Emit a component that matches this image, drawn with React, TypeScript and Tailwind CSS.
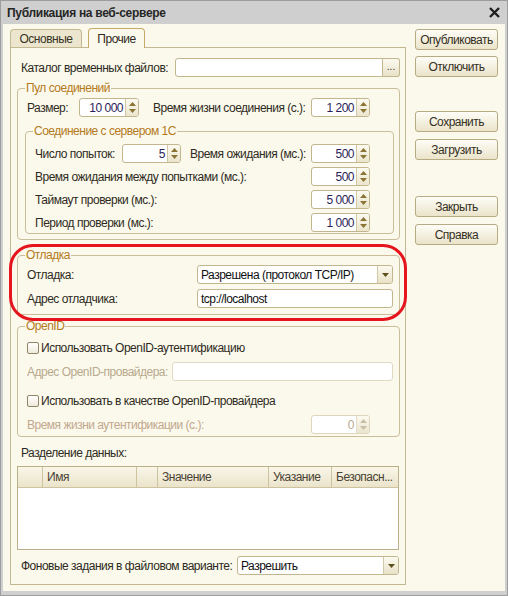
import React from "react";

type Kids = { children?: React.ReactNode; className?: string };

function Btn({ children, className = "" }: Kids) {
  return (
    <div
      className={`flex h-[21px] w-[83px] items-center justify-center rounded-[3px] border border-[#b7ab84] bg-linear-to-b from-[#fefdf7] to-[#ebe4ca] text-[#35301f] ${className}`}
    >
      {children}
    </div>
  );
}

function Tri({ up = false, color = "#8a7434" }: { up?: boolean; color?: string }) {
  return (
    <svg width="7" height="4" viewBox="0 0 7 4">
      <path d={up ? "M0 4 L3.5 0 L7 4 Z" : "M0 0 L7 0 L3.5 4 Z"} fill={color} />
    </svg>
  );
}

function Spin({ value, className = "", disabled = false }: { value: string; className?: string; disabled?: boolean }) {
  return (
    <div
      className={`flex h-[19px] shrink-0 overflow-hidden rounded-[3px] border bg-white ${
        disabled ? "border-[#ddd5bd]" : "border-[#c2b68e]"
      } ${className}`}
    >
      <div
        className={`flex flex-1 items-center justify-end pr-[2px] ${
          disabled ? "text-[#b8aa8e]" : "text-[#2b1d58]"
        }`}
      >
        {value}
      </div>
      <div
        className={`flex w-[13px] flex-col items-center justify-center gap-[3px] border-l bg-linear-to-b from-[#fcfaf0] to-[#ebe5cd] ${
          disabled ? "border-[#e3dcc6]" : "border-[#d2c8a6]"
        }`}
      >
        <Tri up color={disabled ? "#c9bfa4" : "#8a7434"} />
        <Tri color={disabled ? "#c9bfa4" : "#8a7434"} />
      </div>
    </div>
  );
}

function Field({ children, className = "", disabled = false }: Kids & { disabled?: boolean }) {
  return (
    <div
      className={`flex h-[19px] shrink-0 items-center rounded-[3px] border bg-white pl-[3px] ${
        disabled ? "border-[#e0d9c3]" : "border-[#c2b68e]"
      } ${className}`}
    >
      {children}
    </div>
  );
}

function Select({ children, className = "" }: Kids) {
  return (
    <div className={`flex h-[19px] shrink-0 overflow-hidden rounded-[3px] border border-[#c2b68e] bg-white ${className}`}>
      <div className="flex flex-1 items-center pl-[3px] text-[#111]">{children}</div>
      <div className="flex w-[15px] items-center justify-center border-l border-[#d2c8a6] bg-linear-to-b from-[#fcfaf0] to-[#e9e2c8]">
        <Tri color="#5e4e1e" />
      </div>
    </div>
  );
}

function Check({ label }: { label: string }) {
  return (
    <div className="flex h-[19px] items-center">
      <div className="h-[12px] w-[12px] shrink-0 rounded-[2px] border border-[#8f8668] bg-linear-to-b from-white to-[#eeeadb]" />
      <span className="ml-[2px]">{label}</span>
    </div>
  );
}

function Group({ title, children, className = "" }: Kids & { title: string }) {
  return (
    <fieldset className={`rounded-[4px] border border-[#c9be99] ${className}`}>
      <legend className="ml-[7px] px-[1px] leading-[14px] text-[#b47a1c]">{title}</legend>
      {children}
    </fieldset>
  );
}

function Row({ children, className = "" }: Kids) {
  return <div className={`flex h-[19px] items-center ${className}`}>{children}</div>;
}

function Label({ children, className = "" }: Kids) {
  return <span className={`shrink-0 overflow-hidden ${className}`}>{children}</span>;
}

const cols = [
  { w: "w-[25px]", t: "" },
  { w: "w-[94px]", t: "Имя" },
  { w: "w-[21px]", t: "" },
  { w: "w-[111px]", t: "Значение" },
  { w: "w-[63px]", t: "Указание" },
  { w: "flex-1", t: "Безопасн..." },
];

export default function App() {
  return (
    <div className="relative flex h-[596px] w-[508px] flex-col overflow-hidden whitespace-nowrap border border-[#9d9d9d] bg-[#cfcfcf] font-['Liberation_Sans',Arial,sans-serif] text-[12px] tracking-[-0.5px] text-[#2e2a22]">
      {/* Заголовок окна */}
      <div className="flex h-[23px] shrink-0 items-center justify-between pl-[6px] pr-[7px]">
        <span className="text-[12px] font-bold tracking-[-0.3px] text-[#262626]">Публикация на веб-сервере</span>
        <svg width="11" height="11" viewBox="0 0 11 11">
          <path d="M1 1 L10 10 M10 1 L1 10" stroke="#1e1e1e" strokeWidth="2.4" />
        </svg>
      </div>

      <div className="mx-[2px] mb-[4px] flex flex-1 bg-[#fbf9ec] pl-[7px]">
        {/* Левая часть с вкладками */}
        <div className="flex w-[396px] flex-col pt-[4px]">
          <div className="flex h-[19px] items-end gap-[6px]">
            <div className="flex h-[18px] w-[72px] items-center justify-center rounded-t-[4px] border border-b-0 border-[#c3b891] bg-[#ece6cf] text-[#3a3426]">
              Основные
            </div>
            <div className="relative z-10 -mb-px flex h-[20px] w-[57px] items-center justify-center rounded-t-[4px] border border-b-0 border-[#c7a96a] bg-[#fbf9ec] text-[#2e2a22]">
              Прочие
            </div>
          </div>

          <div className="flex flex-col border border-[#c3b891] pb-[9px] pl-[6px] pr-[5px]">
            <Row className="mt-[10px]">
              <Label className="ml-[4px] w-[154px]">Каталог временных файлов:</Label>
              <Field className="w-[208px] rounded-r-none" />
              <div className="flex h-[19px] w-[17px] items-end justify-center rounded-r-[3px] border border-l-0 border-[#c2b68e] bg-linear-to-b from-[#fcfaf0] to-[#e9e2c8] pb-[4px] text-[10px] leading-none tracking-[0px] text-[#3a3426]">
                ...
              </div>
            </Row>

            <Group title="Пул соединений" className="mt-[4px] w-[383px] pb-[5px]">
              <Row className="mt-[3px] pl-[9px]">
                <Label className="w-[52px]">Размер:</Label>
                <Spin value="10 000" className="w-[60px]" />
                <Label className="ml-[14px] w-[158px]">Время жизни соединения (с.):</Label>
                <Spin value="1 200" className="w-[59px]" />
              </Row>

              <Group title="Соединение с сервером 1С" className="ml-[7px] mt-[7px] w-[369px] pb-[1px]">
                <div className="mt-[6px] flex flex-col gap-[4px] pl-[9px]">
                  <Row>
                    <Label className="w-[87px]">Число попыток:</Label>
                    <Spin value="5" className="w-[59px]" />
                    <Label className="ml-[9px] w-[121px]">Время ожидания (мс.):</Label>
                    <Spin value="500" className="w-[59px]" />
                  </Row>
                  <Row>
                    <Label className="w-[276px]">Время ожидания между попытками (мс.):</Label>
                    <Spin value="500" className="w-[59px]" />
                  </Row>
                  <Row>
                    <Label className="w-[276px]">Таймаут проверки (мс.):</Label>
                    <Spin value="5 000" className="w-[59px]" />
                  </Row>
                  <Row>
                    <Label className="w-[276px]">Период проверки (мс.):</Label>
                    <Spin value="1 000" className="w-[59px]" />
                  </Row>
                </div>
              </Group>
            </Group>

            <Group title="Отладка" className="mt-[8px] w-[383px] pb-[6px]">
              <div className="mt-[3px] flex flex-col gap-[5px] pl-[9px]">
                <Row>
                  <Label className="w-[170px]">Отладка:</Label>
                  <Select className="w-[196px]">Разрешена (протокол TCP/IP)</Select>
                </Row>
                <Row>
                  <Label className="w-[170px]">Адрес отладчика:</Label>
                  <Field className="w-[196px] text-[#111]">tcp://localhost</Field>
                </Row>
              </div>
            </Group>

            <Group title="OpenID" className="mt-[4px] w-[383px] pb-[2px]">
              <div className="mt-[5px] flex flex-col pl-[9px]">
                <Check label="Использовать OpenID-аутентификацию" />
                <Row className="mt-[5px] text-[#b8a98c]">
                  <Label className="w-[145px]">Адрес OpenID-провайдера:</Label>
                  <Field disabled className="w-[221px]" />
                </Row>
                <div className="mt-[10px]">
                  <Check label="Использовать в качестве OpenID-провайдера" />
                </div>
                <Row className="mt-[5px] text-[#c1a88e]">
                  <Label className="w-[284px]">Время жизни аутентификации (с.):</Label>
                  <Spin disabled value="0" className="w-[59px]" />
                </Row>
              </div>
            </Group>

            <div className="mt-[9px] h-[14px] pl-[4px] leading-[14px]">Разделение данных:</div>

            <div className="mt-[6px] flex h-[84px] w-[382px] flex-col border border-[#bcb08a] bg-white">
              <div className="flex h-[21px] shrink-0 border-b border-[#cdc3a0] bg-linear-to-b from-[#f9f6e8] to-[#ebe4cb] text-[#4a4232]">
                {cols.map((c, i) => (
                  <div
                    key={i}
                    className={`flex items-center overflow-hidden pl-[4px] ${c.w} ${i < cols.length - 1 ? "border-r border-[#cdc3a0]" : ""}`}
                  >
                    {c.t}
                  </div>
                ))}
              </div>
            </div>

            <Row className="mt-[6px]">
              <Label className="ml-[4px] w-[216px]">Фоновые задания в файловом варианте:</Label>
              <Select className="w-[162px]">Разрешить</Select>
            </Row>
          </div>
        </div>

        {/* Кнопки справа */}
        <div className="ml-[9px] flex flex-col pt-[5px]">
          <Btn>Опубликовать</Btn>
          <Btn className="mt-[6px]">Отключить</Btn>
          <Btn className="mt-[34px]">Сохранить</Btn>
          <Btn className="mt-[7px]">Загрузить</Btn>
          <Btn className="mt-[36px]">Закрыть</Btn>
          <Btn className="mt-[7px]">Справка</Btn>
        </div>
      </div>

      {/* Красная рамка выделения */}
      <div className="pointer-events-none absolute left-[8px] top-[243px] h-[77px] w-[398px] rounded-[24px] border-[3px] border-[#e5141d]" />
    </div>
  );
}
